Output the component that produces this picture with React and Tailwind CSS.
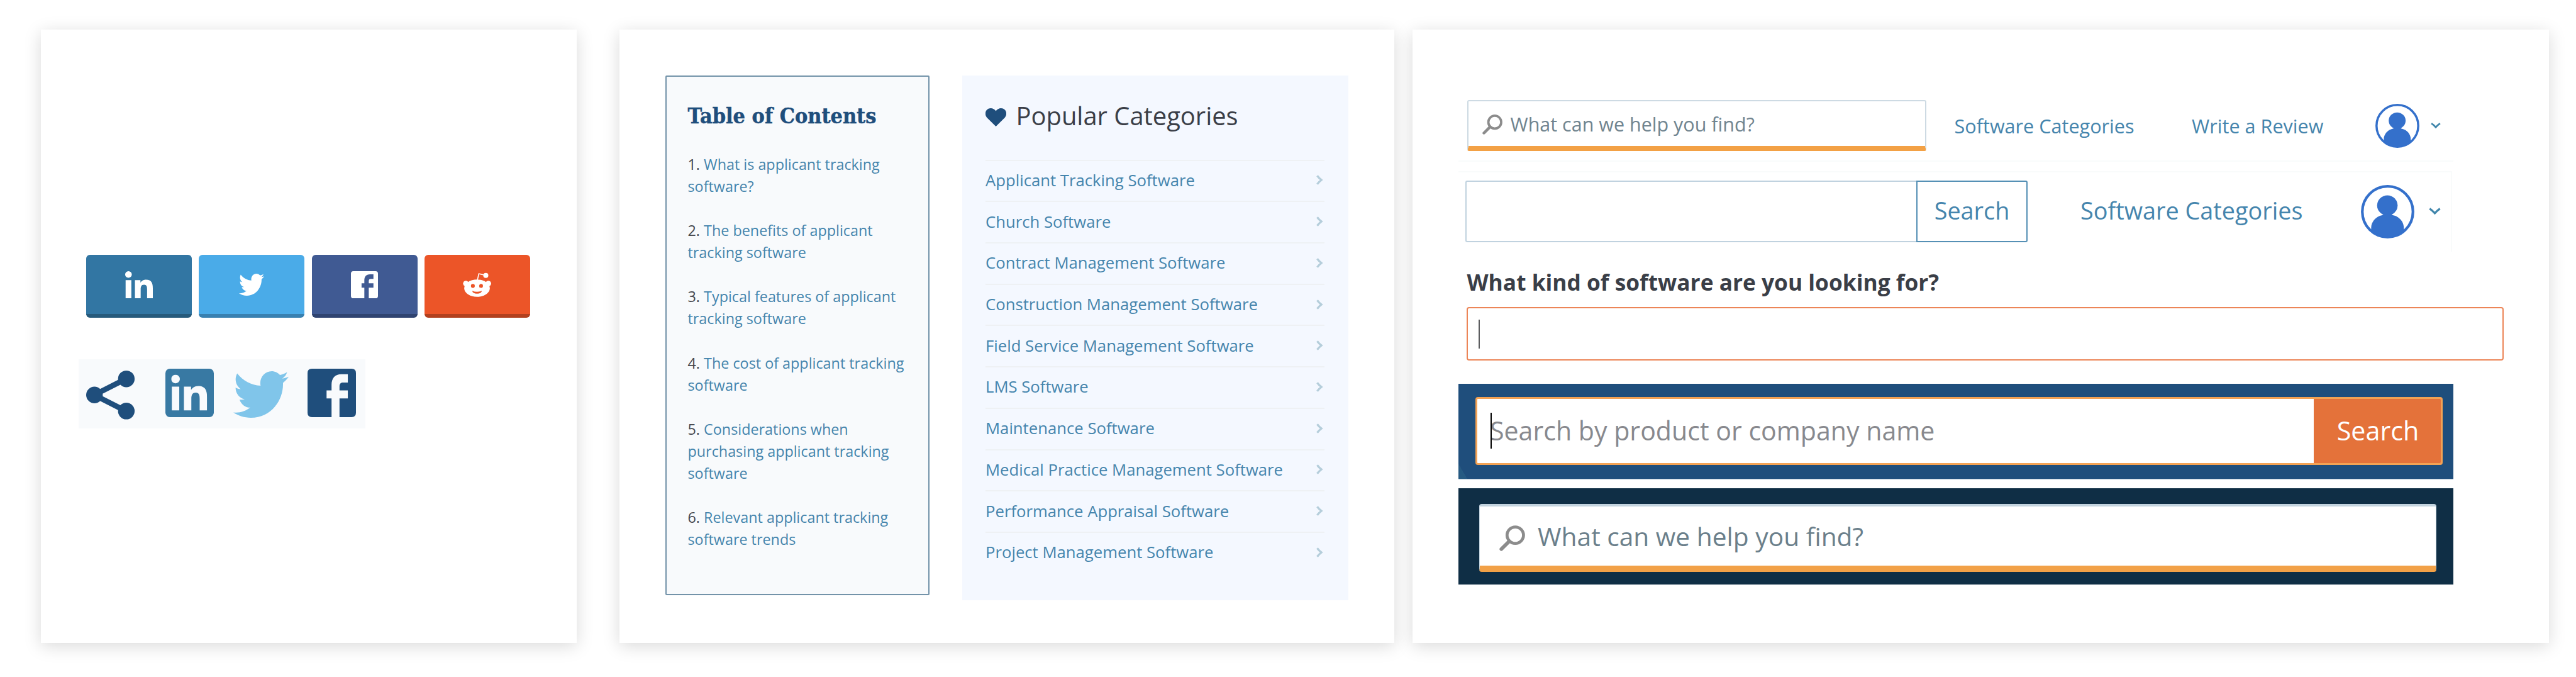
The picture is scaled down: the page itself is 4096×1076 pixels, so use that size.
const LINKEDIN_PATH =
  "M100.28 448H7.4V148.9h92.88zM53.79 108.1C24.09 108.1 0 83.5 0 53.8a53.79 53.79 0 0 1 107.58 0c0 29.7-24.1 54.3-53.79 54.3zM447.9 448h-92.68V302.4c0-34.7-.7-79.2-48.29-79.2-48.29 0-55.69 37.7-55.69 76.7V448h-92.78V148.9h89.08v40.8h1.3c12.4-23.5 42.69-48.3 87.88-48.3 94 0 111.28 61.9 111.28 142.3V448z";

const TWITTER_PATH =
  "M459.37 151.716c.325 4.548.325 9.097.325 13.645 0 138.72-105.583 298.558-298.558 298.558-59.452 0-114.68-17.219-161.137-47.106 8.447.974 16.568 1.299 25.34 1.299 49.055 0 94.213-16.568 130.274-44.832-46.132-.975-84.792-31.188-98.112-72.772 6.498.974 12.995 1.624 19.818 1.624 9.421 0 18.843-1.3 27.614-3.573-48.081-9.747-84.143-51.98-84.143-102.985v-1.299c13.969 7.797 30.214 12.67 47.431 13.319-28.264-18.843-46.781-51.005-46.781-87.391 0-19.492 5.197-37.36 14.294-52.954 51.655 63.675 129.3 105.258 216.365 109.807-1.624-7.797-2.599-15.918-2.599-24.04 0-57.828 46.782-104.934 104.934-104.934 30.213 0 57.502 12.67 76.67 33.137 23.715-4.548 46.456-13.32 66.599-25.34-7.798 24.366-24.366 44.833-46.132 57.827 21.117-2.273 41.584-8.122 60.426-16.243-14.292 20.791-32.161 39.308-52.628 54.253z";

function LinkedinIcon({ className }) {
  return (
    <svg viewBox="0 0 448 448" className={className} fill="currentColor" preserveAspectRatio="none">
      <path d={LINKEDIN_PATH} />
    </svg>
  );
}

function LinkedinSquareIcon({ className }) {
  return (
    <svg viewBox="0 0 108 108" className={className}>
      <rect width="108" height="108" rx="10" fill="currentColor" />
      <svg x="13" y="13.3" width="80" height="80" viewBox="0 0 448 448" fill="#f8fafd">
        <path d={LINKEDIN_PATH} />
      </svg>
    </svg>
  );
}

function TwitterIcon({ className }) {
  return (
    <svg viewBox="0 48 512 416" className={className} fill="currentColor" preserveAspectRatio="none">
      <path d={TWITTER_PATH} />
    </svg>
  );
}

function FacebookIcon({ className }) {
  return (
    <svg viewBox="0 0 100 100" className={className} fill="currentColor">
      <path d="M9 0H91Q100 0 100 9V91Q100 100 91 100H66V61.3H83.2V44.8H66V36.5C66 31 68.5 28.5 74 28.5H83.2V11.5H70C56.5 11.5 49.6 20 49.6 33.5V44.8H39.3V61.3H49.6V100H9Q0 100 0 91V9Q0 0 9 0Z" />
    </svg>
  );
}

function RedditIcon({ className }) {
  return (
    <svg viewBox="293 130 190 164" className={className} fill="currentColor">
      <path d="M390 184L400 138L438 148" fill="none" stroke="currentColor" strokeWidth="6.5" strokeLinejoin="round" />
      <circle cx="447" cy="150" r="17" />
      <circle cx="313" cy="204" r="18.5" />
      <circle cx="464" cy="204" r="18.5" />
      <ellipse cx="388" cy="235" rx="86" ry="58" />
      <circle cx="360" cy="220" r="13" fill="#ec5528" />
      <circle cx="415" cy="220" r="13" fill="#ec5528" />
      <path d="M356 253Q388 266 420 253Q418 271 388 272Q358 271 356 253Z" fill="#ec5528" />
    </svg>
  );
}

function ShareIcon({ className }) {
  return (
    <svg viewBox="0 0 108 108" className={className} fill="currentColor">
      <path d="M89 18L18 54L89 90" fill="none" stroke="currentColor" strokeWidth="12" />
      <circle cx="89" cy="18.4" r="18.4" />
      <circle cx="18.4" cy="54" r="18.4" />
      <circle cx="89" cy="89.6" r="18.4" />
    </svg>
  );
}

function SearchIcon({ className }) {
  return (
    <svg viewBox="0 0 57 57" className={className} fill="none" stroke="#8c8c8c" strokeLinecap="round">
      <circle cx="35.3" cy="21.7" r="18.2" strokeWidth="6.6" />
      <path d="M22 35L4.5 52.5" strokeWidth="8" />
    </svg>
  );
}

function Avatar({ className }) {
  return (
    <svg viewBox="0 0 100 100" className={className} fill="#3470cb">
      <circle cx="50" cy="50" r="47.4" fill="none" stroke="#3470cb" strokeWidth="5" />
      <ellipse cx="49.5" cy="38.3" rx="19.2" ry="18.8" />
      <path d="M42 54Q42.500 56 40 56.500C27 59 19.200 70 19.200 80V86.500A48.500 48.500 0 0 0 80.300 86.500V80C80.300 70 73 59 59.500 56.500Q57 56 57.500 54Z" />
    </svg>
  );
}

function ChevronDown({ className }) {
  return (
    <svg viewBox="0 0 22 13" className={className} fill="none" stroke="#4086ab" strokeWidth="3.8">
      <path d="M1.500 1.600Q6 4.500 11 10Q16 4.500 20.500 1.600" />
    </svg>
  );
}

function ChevronRight({ className }) {
  return (
    <svg viewBox="0 0 14 22" className={className} fill="none" stroke="#b5cedb" strokeWidth="4.6">
      <path d="M2 1.500Q6 7 11.500 11Q6 15 2 20.500" />
    </svg>
  );
}

const CONTENTS = [
  "What is applicant tracking software?",
  "The benefits of applicant tracking software",
  "Typical features of applicant tracking software",
  "The cost of applicant tracking software",
  "Considerations when purchasing applicant tracking software",
  "Relevant applicant tracking software trends",
];

const CATEGORIES = [
  "Applicant Tracking Software",
  "Church Software",
  "Contract Management Software",
  "Construction Management Software",
  "Field Service Management Software",
  "LMS Software",
  "Maintenance Software",
  "Medical Practice Management Software",
  "Performance Appraisal Software",
  "Project Management Software",
];

function Card({ className, children }) {
  return (
    <section className={"h-[975px] shrink-0 bg-white shadow-[0_5px_26px_rgba(0,0,0,0.15)] " + className}>
      {children}
    </section>
  );
}

function ShareButton({ className, children }) {
  return (
    <button className={"flex h-[100px] w-[168px] items-center justify-center rounded-[6px] border-b-[6px] text-white " + className}>
      {children}
    </button>
  );
}

function SocialCard() {
  return (
    <Card className="w-[852px] pt-[358px]">
      <div className="ml-[72px] flex gap-[11.3px]">
        <ShareButton className="border-[#265a7b] bg-[#3276a3]">
          <LinkedinIcon className="h-[43px] w-[44px]" />
        </ShareButton>
        <ShareButton className="border-[#3880b0] bg-[#4aabe8]">
          <TwitterIcon className="h-[35px] w-[40px]" />
        </ShareButton>
        <ShareButton className="border-[#2f4370] bg-[#405a93]">
          <FacebookIcon className="size-[43px]" />
        </ShareButton>
        <ShareButton className="border-[#b2401e] bg-[#ec5528]">
          <RedditIcon className="h-[39px] w-[45px]" />
        </ShareButton>
      </div>
      <div className="mt-[66px] ml-[60px] flex h-[110px] w-[456px] items-start bg-[#f8fafc] pt-[15px] pl-[12px]">
        <ShareIcon className="mt-[3px] size-[77.5px] text-[#1f4e7c]" />
        <LinkedinSquareIcon className="ml-[48px] size-[77px] text-[#3879a3]" />
        <TwitterIcon className="mt-[4px] ml-[31px] h-[74px] w-[88px] text-[#80c5ea]" />
        <FacebookIcon className="ml-[30px] size-[77px] text-[#1f4e7c]" />
      </div>
    </Card>
  );
}

function ListsCard() {
  return (
    <Card className="ml-[68px] flex w-[1232px] items-start pt-[73px] pl-[72.5px]">
      <div className="h-[826px] w-[420px] rounded-[2px] border-2 border-[#7393a9] bg-[#f8fafc] pr-[32px] pl-[34px] pt-[42px]">
        <h2 className="font-['DejaVu_Serif_Condensed','DejaVu_Serif',serif] text-[33.9px] leading-[40px] font-bold whitespace-nowrap text-[#1f4e7c] [font-stretch:condensed] [-webkit-text-stroke:0.5px_#1f4e7c]">
          Table of Contents
        </h2>
        <ol className="mt-[40px] flex flex-col gap-[35.06px] text-[23.35px] leading-[35.06px] text-[#4585ad]">
          {CONTENTS.map((title, i) => (
            <li key={title}>
              <span className="text-[#45474d]">{i + 1}.</span> {title}
            </li>
          ))}
        </ol>
      </div>
      <div className="ml-[52px] h-[834px] w-[614px] bg-[#f4f8ff] pr-[38px] pl-[37.5px] pt-[36px]">
        <h2 className="flex h-[56px] items-center text-[39.9px] leading-[56px] text-[#3a3e47]">
          <svg viewBox="0 0 33 29" className="mt-[5px] h-[29px] w-[33px]" fill="#1f4e7c">
            <path d="M16.500 29L2.800 15.500C-1.200 11.500 -.8 5.500 2.200 2.500C6.500 -1.500 13 -.5 16.500 4.500C20 -.5 26.500 -1.500 30.800 2.500C33.800 5.500 34.200 11.500 30.200 15.500Z" />
          </svg>
          <span className="ml-[15.500px]">Popular Categories</span>
        </h2>
        <ul className="mt-[41.500px] text-[25.7px] text-[#4585ad]">
          {CATEGORIES.map((name) => (
            <li key={name} className="flex h-[65.72px] items-center justify-between border-t-2 border-[#eef1f4] pr-[3px]">
              <span className="-mt-[1px] leading-[36px]">{name}</span>
              <ChevronRight className="mb-[2px] h-[16px] w-[10px]" />
            </li>
          ))}
        </ul>
      </div>
    </Card>
  );
}

function SearchCard() {
  return (
    <Card className="ml-[29px] w-[1807px] pl-[73px]">
      <div className="flex h-[210px] w-[1582px] items-start border-b-2 border-[#f9fbfb] pt-[112px] pl-[13.5px]">
        <div className="flex h-[81px] w-[730px] items-center rounded-[3px] border-2 border-b-[8px] border-[#cddae3] border-b-[#f3a145] pl-[22px]">
          <SearchIcon className="mt-[3px] size-[32px]" />
          <span className="ml-[13px] text-[30.5px] leading-[42px] text-[#70848f]">What can we help you find?</span>
        </div>
        <nav className="flex h-[81px] items-center text-[30.6px] leading-[42px] text-[#4585ad]">
          <a className="ml-[45px] whitespace-nowrap">Software Categories</a>
          <a className="ml-[91.5px] whitespace-nowrap">Write a Review</a>
          <Avatar className="ml-[82.500px] size-[70px]" />
          <ChevronDown className="ml-[18px] h-[9.500px] w-[16px]" />
        </nav>
      </div>
      <div className="mt-[15px] flex h-[128px] w-[1580px] items-start border-t-2 border-r-2 border-[#f9fbfb] pt-[13px] pl-[11px] text-[37.8px] leading-[52px] text-[#4585ad]">
        <div className="h-[98px] w-[717px] rounded-l-[3px] border-2 border-r-0 border-[#c0d2df]" />
        <button className="flex h-[98px] w-[177px] items-center justify-center rounded-r-[3px] border-2 border-[#5590b5]">
          <span className="-mt-[2px]">Search</span>
        </button>
        <div className="flex h-[98px] items-center">
          <a className="-mt-[2px] ml-[84px] whitespace-nowrap">Software Categories</a>
          <Avatar className="ml-[92.500px] size-[85px]" />
          <ChevronDown className="ml-[23px] h-[11.500px] w-[19px]" />
        </div>
      </div>
      <h3 className="mt-[24px] ml-[13.5px] text-[35.3px] leading-[48px] font-bold text-[#3a3e47]">
        What kind of software are you looking for?
      </h3>
      <div className="mt-[16px] ml-[13px] flex h-[85px] w-[1649px] items-center rounded-[4px] border-2 border-[#ec8557] pl-[17px]">
        <div className="h-[46px] w-[2px] bg-[#5c5d60]" />
      </div>
      <div className="mt-[36.500px] h-[152px] w-[1582px] border-b border-[#a5b8ca] bg-[#1f4e7c] bg-[linear-gradient(60deg,#265a82_12px,transparent_12px)] pt-[21px] pl-[27px]">
        <div className="flex h-[108px] w-[1538px] overflow-hidden rounded-[4px] border-[3px] border-[#f3a254] bg-white">
          <div className="flex grow items-center pl-[21px]">
            <div className="relative z-10 h-[57px] w-[2px] bg-black" />
            <span className="-mt-[1px] -ml-[3px] text-[41.1px] leading-[56px] text-[#88898e]">Search by product or company name</span>
          </div>
          <button className="w-[202px] bg-[#e4723a] pb-[1px] pl-[2px] text-[41.2px] leading-[56px] text-white">Search</button>
        </div>
      </div>
      <div className="mt-[14.500px] h-[153px] w-[1582px] bg-[#0f2e45] pt-[25px] pl-[33px]">
        <div className="flex h-[108px] w-[1522px] items-center rounded-[4px] border border-t-4 border-b-[10px] border-[#c3d3de] border-b-[#f2a147] bg-white pl-[31px]">
          <SearchIcon className="mt-[6px] size-[41px]" />
          <span className="-mt-[1px] ml-[20px] text-[40.7px] leading-[56px] text-[#6b7f8b]">What can we help you find?</span>
        </div>
      </div>
    </Card>
  );
}

export default function App() {
  return (
    <main className="flex h-[1076px] w-[4096px] items-start overflow-hidden bg-white pt-[47px] pl-[65px] font-['Open_Sans',sans-serif]">
      <SocialCard />
      <ListsCard />
      <SearchCard />
    </main>
  );
}
